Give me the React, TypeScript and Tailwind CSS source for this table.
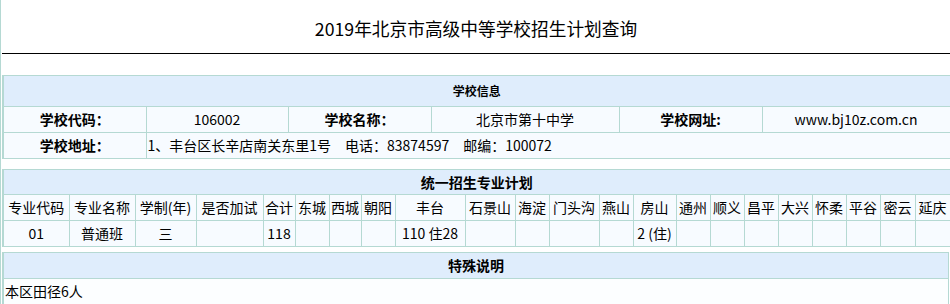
const districts = ['东城', '西城', '朝阳', '丰台', '石景山', '海淀', '门头沟', '燕山', '房山', '通州', '顺义', '昌平', '大兴', '怀柔', '平谷', '密云', '延庆']

const planWidths = [66, 66, 61, 67, 32, 34, 32, 34, 70, 50, 34, 50, 34, 43, 34, 34, 34, 34, 34, 34, 35, 35]

const planRow: Record<string, string> = { 丰台: '110 住28', 房山: '2 (住)' }

const cell = 'border border-[#b5d9d3] h-[26px] p-0 text-center'
const td = cell + ' font-normal'
const label = cell + ' font-bold'

export default function App() {
    return (
        <div
            className="w-[950px] h-[304px] bg-white border-l border-[#b5d9d3] text-black text-[14px] overflow-hidden"
            style={{ fontFamily: '"Noto Sans CJK SC", "Microsoft YaHei", sans-serif' }}
        >
            <div className="ml-[1px] h-[54px] pt-[5px] border-b border-black flex items-center justify-center">
                <h1 className="text-[17.7px] font-normal leading-none">2019年北京市高级中等学校招生计划查询</h1>
            </div>

            <table className="mt-[21px] ml-[1px] w-[947px] table-fixed border-collapse border-l-2 border-[#b5d9d3] bg-[#f7fbff]">
                <colgroup>
                    <col className="w-[143px]" />
                    <col className="w-[142px]" />
                    <col className="w-[143px]" />
                    <col className="w-[188px]" />
                    <col className="w-[143px]" />
                    <col className="w-[188px]" />
                </colgroup>
                <tbody>
                    <tr className="bg-[#dfedfc]">
                        <th colSpan={6} className="border border-[#b5d9d3] h-[31px] p-0 text-[12px] font-bold text-center">
                            学校信息
                        </th>
                    </tr>
                    <tr>
                        <td className={label}>学校代码：</td>
                        <td className={td}>106002</td>
                        <td className={label}>学校名称：</td>
                        <td className={td}>北京市第十中学</td>
                        <td className={label}>学校网址:</td>
                        <td className={td}>www.bj10z.com.cn</td>
                    </tr>
                    <tr>
                        <td className={label}>学校地址：</td>
                        <td colSpan={5} className="border border-[#b5d9d3] h-[26px] p-0 pl-[1px] text-left">
                            1、丰台区长辛店南关东里1号　电话：83874597　邮编：100072
                        </td>
                    </tr>
                </tbody>
            </table>

            <table className="mt-[10px] ml-[1px] w-[947px] table-fixed border-collapse border-l-2 border-[#b5d9d3] bg-[#f7fbff]">
                <colgroup>
                    {planWidths.map((w, i) => (
                        <col key={i} style={{ width: w }} />
                    ))}
                </colgroup>
                <tbody>
                    <tr className="bg-[#dfedfc]">
                        <th colSpan={22} className="border border-[#b5d9d3] h-[25px] p-0 font-bold text-center">
                            统一招生专业计划
                        </th>
                    </tr>
                    <tr>
                        <td className={td}>专业代码</td>
                        <td className={td}>专业名称</td>
                        <td className={td}>学制(年)</td>
                        <td className={td}>是否加试</td>
                        <td className={td}>合计</td>
                        {districts.map((d) => (
                            <td key={d} className={td}>
                                {d}
                            </td>
                        ))}
                    </tr>
                    <tr>
                        <td className={td}>01</td>
                        <td className={td}>普通班</td>
                        <td className={td}>三</td>
                        <td className={td}></td>
                        <td className={td}>118</td>
                        {districts.map((d) => (
                            <td key={d} className={td}>
                                {planRow[d] ?? ''}
                            </td>
                        ))}
                    </tr>
                </tbody>
            </table>

            <table className="mt-[5px] ml-[1px] w-[947px] table-fixed border-collapse border-l-2 border-[#b5d9d3] bg-[#fcfeff]">
                <tbody>
                    <tr className="bg-[#dfedfc]">
                        <th className="border border-[#b5d9d3] h-[26px] p-0 font-bold text-center">特殊说明</th>
                    </tr>
                    <tr>
                        <td className="border border-[#b5d9d3] h-[26px] p-0 pl-[1px] text-left">本区田径6人</td>
                    </tr>
                </tbody>
            </table>
        </div>
    )
}
